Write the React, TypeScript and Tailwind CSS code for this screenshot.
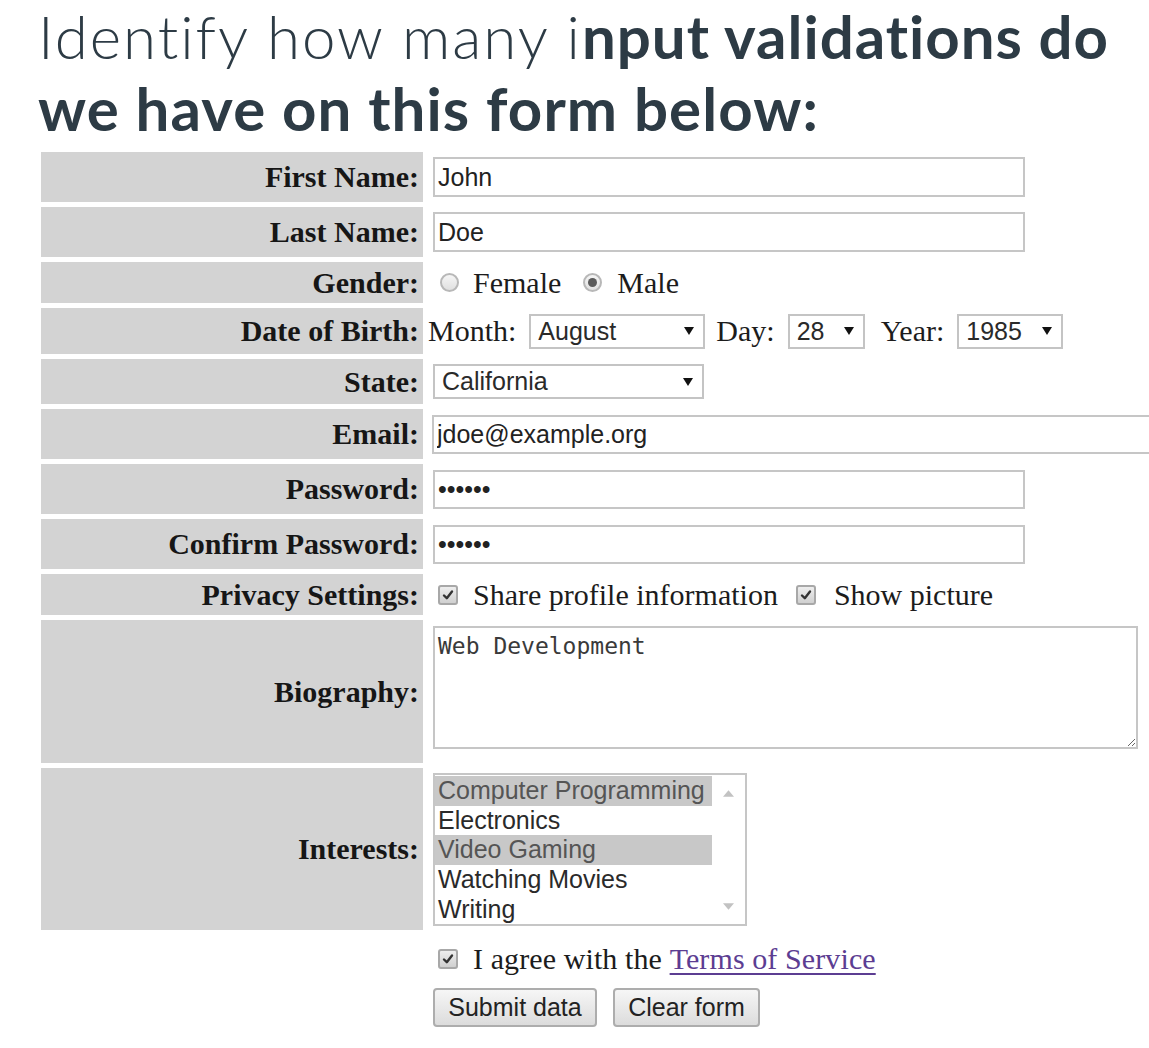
import React from "react";

function Row({ h, label, children }: { h: string; label?: string; children: React.ReactNode }) {
  return (
    <div className={`flex gap-[4px] ${h}`}>
      {label !== undefined ? (
        <div className="w-[382px] shrink-0 bg-[#d3d3d3] flex items-center justify-end pr-[4px] font-['Liberation_Serif',serif] font-bold text-[30px] leading-none text-[#161616]">
          {label}
        </div>
      ) : (
        <div className="w-[382px] shrink-0" />
      )}
      <div className="flex-1 min-w-0 flex items-center overflow-hidden font-['Liberation_Serif',serif] text-[30px] leading-none text-[#1c1c1c]">
        {children}
      </div>
    </div>
  );
}

function Radio({ checked }: { checked?: boolean }) {
  return (
    <span className="w-[19px] h-[19px] shrink-0 rounded-full border-2 border-[#b8b8b8] bg-linear-to-b from-[#f6f6f6] to-[#e0e0e0] flex items-center justify-center">
      {checked && <span className="w-[9px] h-[9px] rounded-full bg-[#5a5a5a]" />}
    </span>
  );
}

function Check() {
  return (
    <span className="w-[20px] h-[20px] shrink-0 rounded-[3px] border-2 border-[#a8a8a8] bg-linear-to-b from-[#eeeeee] to-[#d0d0d0] flex items-center justify-center">
      <svg viewBox="0 0 12 12" className="w-[12px] h-[12px]">
        <path d="M2 6.5 L4.8 9.2 L10 2.5" stroke="#333" strokeWidth="2.4" fill="none" strokeLinecap="round" strokeLinejoin="round" />
      </svg>
    </span>
  );
}

function Arrow() {
  return (
    <svg viewBox="0 0 10 8" className="w-[10px] h-[8px] shrink-0">
      <path d="M0 0 H10 L5 8 Z" fill="#111" />
    </svg>
  );
}

function Select({ value, w }: { value: string; w: string }) {
  return (
    <div className={`h-[35px] ${w} shrink-0 border-2 border-[#c4c4c4] bg-white flex items-center justify-between pl-[7px] pr-[9px] font-['Liberation_Sans',Arial,sans-serif] text-[25px] leading-none text-[#2a2a2a]`}>
      <span>{value}</span>
      <Arrow />
    </div>
  );
}

const interests = [
  { t: "Computer Programming", on: true },
  { t: "Electronics", on: false },
  { t: "Video Gaming", on: true },
  { t: "Watching Movies", on: false },
  { t: "Writing", on: false },
];

export default function App() {
  return (
    <div className="w-full h-[1048px] overflow-hidden bg-white">
      <h1 className="pl-[38px] font-['Lato',sans-serif] text-[60px] leading-[72px] text-[#2d3b45] whitespace-nowrap [font-variant-ligatures:none]">
        <span className="font-light tracking-[2px]">Identify how many i</span>
        <span className="font-bold tracking-[1px]">nput validations do</span>
        <br />
        <span className="font-bold tracking-[1.1px]">we have on this form below:</span>
      </h1>

      <form className="mt-[8px] ml-[41px] flex flex-col gap-[5px]">
        <Row h="h-[50px]" label="First Name:">
          <input readOnly defaultValue="John" className="ml-[6px] h-[40px] w-[592px] shrink-0 border-2 border-[#c6c6c6] px-[3px] font-['Liberation_Sans',Arial,sans-serif] text-[25px] text-[#222] outline-none" />
        </Row>
        <Row h="h-[50px]" label="Last Name:">
          <input readOnly defaultValue="Doe" className="ml-[6px] h-[40px] w-[592px] shrink-0 border-2 border-[#c6c6c6] px-[3px] font-['Liberation_Sans',Arial,sans-serif] text-[25px] text-[#222] outline-none" />
        </Row>
        <Row h="h-[41px]" label="Gender:">
          <span className="ml-[13px]"><Radio /></span>
          <span className="ml-[14px]">Female</span>
          <span className="ml-[22px]"><Radio checked /></span>
          <span className="ml-[15px]">Male</span>
        </Row>
        <Row h="h-[46px]" label="Date of Birth:">
          <span className="ml-[1px]">Month:</span>
          <span className="ml-[13px]"><Select value="August" w="w-[176px]" /></span>
          <span className="ml-[11px]">Day:</span>
          <span className="ml-[13px]"><Select value="28" w="w-[77px]" /></span>
          <span className="ml-[16px]">Year:</span>
          <span className="ml-[13px]"><Select value="1985" w="w-[106px]" /></span>
        </Row>
        <Row h="h-[45px]" label="State:">
          <span className="ml-[6px]"><Select value="California" w="w-[271px]" /></span>
        </Row>
        <Row h="h-[50px]" label="Email:">
          <input readOnly defaultValue="jdoe@example.org" className="ml-[5px] h-[39px] w-[800px] shrink-0 border-2 border-[#c6c6c6] px-[3px] font-['Liberation_Sans',Arial,sans-serif] text-[25px] text-[#222] outline-none" />
        </Row>
        <Row h="h-[50px]" label="Password:">
          <input type="password" readOnly defaultValue="123456" className="ml-[6px] h-[39px] w-[592px] shrink-0 border-2 border-[#c6c6c6] px-[3px] font-['Liberation_Sans',Arial,sans-serif] text-[25px] text-[#222] outline-none" />
        </Row>
        <Row h="h-[50px]" label="Confirm Password:">
          <input type="password" readOnly defaultValue="123456" className="ml-[6px] h-[39px] w-[592px] shrink-0 border-2 border-[#c6c6c6] px-[3px] font-['Liberation_Sans',Arial,sans-serif] text-[25px] text-[#222] outline-none" />
        </Row>
        <Row h="h-[41px]" label="Privacy Settings:">
          <span className="ml-[11px]"><Check /></span>
          <span className="ml-[15px]">Share profile information</span>
          <span className="ml-[18px]"><Check /></span>
          <span className="ml-[18px]">Show picture</span>
        </Row>
        <Row h="h-[143px]" label="Biography:">
          <textarea readOnly defaultValue="Web Development" className="ml-[6px] self-start mt-[6px] h-[123px] w-[705px] shrink-0 border-2 border-[#c6c6c6] px-[3px] py-[5px] font-['DejaVu_Sans_Mono',monospace] text-[23px] leading-[26px] text-[#3a3a3a] outline-none" />
        </Row>
        <Row h="h-[162px]" label="Interests:">
          <div className="ml-[6px] self-start mt-[5px] h-[153px] w-[314px] shrink-0 border-2 border-[#c6c6c6] flex pt-[1px] font-['Liberation_Sans',Arial,sans-serif] text-[25px] leading-none text-[#2a2a2a]">
            <div className="w-[277px] shrink-0 flex flex-col">
              {interests.map((o) => (
                <div key={o.t} className={`h-[30px] flex items-center pl-[3px] whitespace-nowrap ${o.on ? "bg-[#c8c8c8] text-[#555]" : ""}`}>
                  {o.t}
                </div>
              ))}
            </div>
            <div className="flex-1 flex flex-col items-center justify-between py-[14px]">
              <svg viewBox="0 0 10 6" className="w-[11px] h-[7px]"><path d="M0 6 L5 0 L10 6 Z" fill="#c2c2c2" /></svg>
              <svg viewBox="0 0 10 6" className="w-[11px] h-[7px]"><path d="M0 0 L5 6 L10 0 Z" fill="#c2c2c2" /></svg>
            </div>
          </div>
        </Row>
        <Row h="h-[48px]">
          <span className="ml-[11px]"><Check /></span>
          <span className="ml-[15px] whitespace-pre tracking-[0.1px]">I agree with the </span>
          <a href="#" className="text-[#5c3d92] underline decoration-[2px] underline-offset-[4px] tracking-[0.1px]">Terms of Service</a>
        </Row>
        <Row h="h-[45px]">
          <div className="self-start ml-[6px] flex gap-[16px] font-['Liberation_Sans',Arial,sans-serif] text-[25px] text-[#222]">
            <button type="button" className="h-[39px] w-[164px] border-2 border-[#adadad] rounded-[4px] bg-linear-to-b from-[#f6f6f6] to-[#dcdcdc]">Submit data</button>
            <button type="button" className="h-[39px] w-[147px] border-2 border-[#adadad] rounded-[4px] bg-linear-to-b from-[#f6f6f6] to-[#dcdcdc]">Clear form</button>
          </div>
        </Row>
      </form>
    </div>
  );
}
